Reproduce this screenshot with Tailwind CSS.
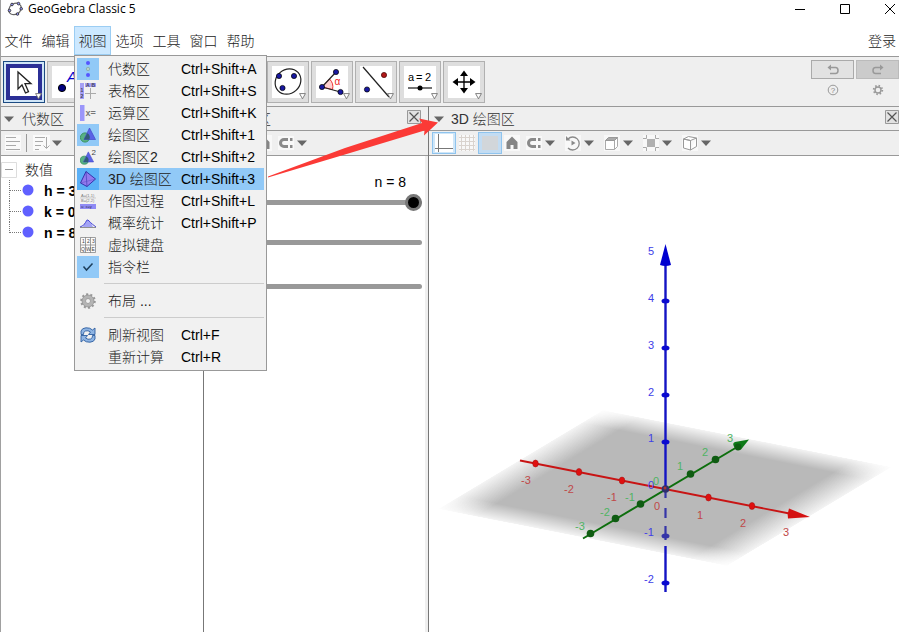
<!DOCTYPE html>
<html lang="zh-CN">
<head>
    <meta charset="UTF-8">
    <meta name="viewport" content="width=device-width, initial-scale=1.0">
    <title>GeoGebra Classic 5</title>
    <script src="https://cdn.jsdelivr.net/npm/@tailwindcss/browser@4"></script>
</head>
<body class="bg-white text-black text-sm font-['Liberation_Sans','Noto_Sans_CJK_SC',sans-serif]">

    <!-- Shared icons -->
    <svg class="hidden">
        <symbol id="tri" viewBox="0 0 10 6"><path d="M0 0.5h10L5 6z" fill="#666"/></symbol>
        <symbol id="corner" viewBox="0 0 6 6"><path d="M0.5 0.5h5L3 5z" fill="#fff" stroke="#777" stroke-width="0.8"/></symbol>
        <symbol id="close" viewBox="0 0 14 14"><path d="M0.5 0.5h13v13h-13z" fill="#e2e2e2" stroke="#999"/><path d="M2.5 2.5l9 9M11.5 2.5l-9 9" stroke="#555" stroke-width="1.2"/></symbol>
        <symbol id="axes" viewBox="0 0 18 18"><path d="M0 0h18v18H0z" fill="#fff"/><path d="M3.5 0v18M0 14.5h18" stroke="#777" fill="none"/></symbol>
        <symbol id="grid" viewBox="0 0 16 16"><path d="M0 0h16v16H0z" fill="#f8f8f8"/><path d="M2.5 0v16M6.5 0v16M10.5 0v16M14.5 0v16M0 2.5h16M0 6.5h16M0 10.5h16M0 14.5h16" stroke="#d9d3ce" fill="none"/></symbol>
        <symbol id="home" viewBox="0 0 16 16"><path d="M0 0h16v16H0z" fill="#f8f8f8"/><path d="M8 1.500L2.500 7v7h4v-4h3v4h4V7z" fill="#858585"/></symbol>
        <symbol id="magnet" viewBox="0 0 16 16"><path d="M0 1h16v14H0z" fill="#f8f8f8"/><path d="M10 4.5H6a3.5 3.5 0 0 0 0 7h4" fill="none" stroke="#8a8a8a" stroke-width="3"/><path d="M12 3h2.5v3H12zM12 10h2.5v3H12z" fill="#8a8a8a"/></symbol>
        <symbol id="gear" viewBox="0 0 16 16"><g fill="none"><circle cx="8" cy="8" r="6.800" stroke="#999" stroke-width="2" stroke-dasharray="2.100 2.172"/><circle cx="8" cy="8" r="4.300" stroke="#b4b4b4" stroke-width="3.400"/><circle cx="8" cy="8" r="6" stroke="#8a8a8a" stroke-width="0.700"/><circle cx="8" cy="8" r="2.500" stroke="#888" stroke-width="0.700"/></g></symbol>
        <symbol id="shapes" viewBox="0 0 16 16"><circle cx="5" cy="10.5" r="4.6" fill="#58b184" stroke="#3c9362"/><path d="M9.500 1l6 11.500H4z" fill="#5a62e6" stroke="#4248c8" stroke-width="0.7"/><path d="M6.300 8.200l1-2a4.600 4.600 0 0 1 2 6.300H4z" fill="#315a78"/></symbol>
    </svg>

    <div class="relative h-screen min-h-[600px] flex flex-col border-l border-[#a0a0a0] overflow-hidden">

        <!-- Title bar -->
        <header class="h-[26px] shrink-0 flex items-center pb-2">
            <svg class="w-4 h-4 ml-1.5" viewBox="0 0 16 16">
                <path d="M5 3.5Q9 1.5 11.5 2.5Q15 5 14 7.5Q13.5 11 11 12.5Q7 14.5 4 13Q1 11 2 8Q2.5 5 5 3.5z" fill="none" stroke="#666" stroke-width="1.2"/>
                <g fill="#99f" stroke="#333" stroke-width="0.9"><circle cx="5" cy="3.5" r="1.3"/><circle cx="11.5" cy="2.6" r="1.3"/><circle cx="14.2" cy="7.8" r="1.3"/><circle cx="10.5" cy="13" r="1.3"/><circle cx="2.500" cy="9.500" r="1.3"/></g>
            </svg>
            <h1 class="ml-[5px] text-xs font-['Open_Sans',sans-serif]">GeoGebra Classic 5</h1>
            <div class="ml-auto flex items-center gap-[35px] pr-1">
                <button aria-label="最小化"><svg class="w-2.5 h-2.5 block" viewBox="0 0 10 10"><path d="M0 5.5h10" stroke="#000"/></svg></button>
                <button aria-label="最大化"><svg class="w-2.5 h-2.5 block" viewBox="0 0 10 10"><path d="M0.5 0.5h9v9h-9z" fill="none" stroke="#000"/></svg></button>
                <button aria-label="关闭"><svg class="w-2.5 h-2.5 block" viewBox="0 0 10 10"><path d="M0 0l10 10M10 0L0 10" stroke="#000"/></svg></button>
            </div>
        </header>

        <!-- Menu bar -->
        <nav class="h-[30px] shrink-0 flex -ml-px font-light text-[#222]">
            <button class="w-[37px]">文件</button>
            <button class="w-[37px]">编辑</button>
            <div class="relative w-[37px]">
                <button class="w-full h-[29px] border border-[#9bcdf3] bg-[#cce8ff]">视图</button>

                <!-- View menu -->
                <div class="absolute z-20 left-0 top-[29px] w-[193px] border border-[#999] bg-[#f1f1f1] p-[2px] text-[#222]">
                    <button class="flex w-full h-[22px] items-center text-left">
                        <span class="w-[22px] h-[22px] p-[3px] bg-[#91c9f7]"><svg viewBox="0 0 16 16"><circle cx="8" cy="2" r="2" fill="#55f"/><circle cx="8" cy="8" r="1.7" fill="#b5d4c8" stroke="#8aa" stroke-width="0.8"/><circle cx="8" cy="14" r="2" fill="#55f"/></svg></span>
                        <span class="w-[73px] ml-[9px]">代数区</span><span class="font-normal text-black">Ctrl+Shift+A</span>
                    </button>
                    <button class="flex w-full h-[22px] items-center text-left">
                        <span class="w-[22px] h-[22px] p-[3px]"><svg viewBox="0 0 16 16"><path d="M5 0h11v4H5zM0 0h4v16H0z" fill="#a5a0f5"/><path d="M10.5 5v11M5 10.5h11" stroke="#aaa"/><g font-size="5" font-weight="bold" fill="#445"><text x="6" y="4">A</text><text x="11.5" y="4">B</text><text x="0.5" y="9">1</text><text x="0.5" y="15">2</text></g></svg></span>
                        <span class="w-[73px] ml-[9px]">表格区</span><span class="font-normal text-black">Ctrl+Shift+S</span>
                    </button>
                    <button class="flex w-full h-[22px] items-center text-left">
                        <span class="w-[22px] h-[22px] p-[3px]"><svg viewBox="0 0 16 16"><path d="M0 0h4.5v16H0z" fill="#9b96fa"/><text x="5.5" y="11" font-size="9" font-weight="bold" fill="#777">x=</text></svg></span>
                        <span class="w-[73px] ml-[9px]">运算区</span><span class="font-normal text-black">Ctrl+Shift+K</span>
                    </button>
                    <button class="flex w-full h-[22px] items-center text-left">
                        <span class="w-[22px] h-[22px] p-[3px] bg-[#91c9f7]"><svg viewBox="0 0 16 16"><use href="#shapes"/></svg></span>
                        <span class="w-[73px] ml-[9px]">绘图区</span><span class="font-normal text-black">Ctrl+Shift+1</span>
                    </button>
                    <button class="flex w-full h-[22px] items-center text-left">
                        <span class="w-[22px] h-[22px] p-[3px]"><svg viewBox="0 0 16 16"><use href="#shapes" y="2" width="14" height="14"/><text x="11.5" y="6" font-size="8" fill="#444">2</text></svg></span>
                        <span class="w-[73px] ml-[9px]">绘图区<span class="font-normal">2</span></span><span class="font-normal text-black">Ctrl+Shift+2</span>
                    </button>
                    <button class="flex w-full h-[22px] items-center text-left bg-[#91c9f7]">
                        <span class="w-[22px] h-[22px] p-[3px] bg-[#5ab0f7]"><svg viewBox="0 0 16 16"><path d="M6 0.5L0.5 12l6.500 3.500L15.5 8z" fill="#9379ee" stroke="#3535ab"/><path d="M6 0.5l1 15" stroke="#3535ab" stroke-width="0.6"/><path d="M0.5 12l15-4" stroke="#5a50c5" stroke-width="0.5"/></svg></span>
                        <span class="w-[73px] ml-[9px]"><span class="font-normal">3D</span> 绘图区</span><span class="font-normal text-black">Ctrl+Shift+3</span>
                    </button>
                    <button class="flex w-full h-[22px] items-center text-left">
                        <span class="w-[22px] h-[22px] p-[3px]"><svg viewBox="0 0 16 16"><path d="M0 11h16v5H0z" fill="#8f8af5"/><g font-size="4" fill="#777"><text x="1" y="4">A=(1,1)</text><text x="1" y="9">B=(2,2)</text><text x="1" y="15" fill="#335">a: x=y</text></g><path d="M0 5h16" stroke="#bbb" stroke-width="0.7"/></svg></span>
                        <span class="w-[73px] ml-[9px]">作图过程</span><span class="font-normal text-black">Ctrl+Shift+L</span>
                    </button>
                    <button class="flex w-full h-[22px] items-center text-left">
                        <span class="w-[22px] h-[22px] p-[3px]"><svg viewBox="0 0 16 16"><path d="M3 12Q6 5 8 5t5 7z" fill="#a3a3f5"/><path d="M0 12Q4 11 5.5 7.5T8 5t2.5 2.5T16 12" fill="none" stroke="#4747d5"/><path d="M0 12.5h16" stroke="#777" stroke-width="0.8"/></svg></span>
                        <span class="w-[73px] ml-[9px]">概率统计</span><span class="font-normal text-black">Ctrl+Shift+P</span>
                    </button>
                    <button class="flex w-full h-[22px] items-center text-left">
                        <span class="w-[22px] h-[22px] p-[3px]"><svg viewBox="0 0 16 16"><path d="M0.5 0.5h15v15H0.5zM0.5 8h15M5.5 0v16M10.5 0v16" fill="#fafafa" stroke="#888" stroke-width="0.800"/><g font-size="5" fill="#444"><text x="2" y="6">1</text><text x="7" y="6">2</text><text x="12" y="6">3</text><text x="1" y="13.5">Q</text><text x="6" y="13.5">W</text><text x="11.5" y="13.5">E</text></g></svg></span>
                        <span class="w-[73px] ml-[9px]">虚拟键盘</span>
                    </button>
                    <button class="flex w-full h-[22px] items-center text-left">
                        <span class="w-[22px] h-[22px] p-[3px] bg-[#91c9f7]"><svg viewBox="0 0 16 16"><path d="M3.5 7.5l3 3.5 6-6.5" fill="none" stroke="#1d3f5c" stroke-width="1.5"/></svg></span>
                        <span class="w-[73px] ml-[9px]">指令栏</span>
                    </button>
                    <hr class="ml-[27px] mt-[5px] mb-[6px] border-[#ccc]">
                    <button class="flex w-full h-[22px] items-center text-left">
                        <span class="w-[22px] h-[22px] p-[3px]"><svg viewBox="0 0 16 16"><use href="#gear"/></svg></span>
                        <span class="w-[73px] ml-[9px]">布局 ...</span>
                    </button>
                    <hr class="ml-[27px] mt-[5px] mb-[6px] border-[#ccc]">
                    <button class="flex w-full h-[22px] items-center text-left">
                        <span class="w-[22px] h-[22px] p-[3px]"><svg viewBox="0 0 16 16"><g fill="#8eb4e3" stroke="#2f5fa0" stroke-width="0.9"><path d="M1 7.5V4Q2 1 6 0.8Q10 0.5 12.5 3L15 1v6.5H8.5L10.5 5Q8 3 5.5 4T3.5 7.5z"/><path d="M15 8.5V12Q14 15 10 15.2Q6 15.5 3.5 13L1 15V8.5h6.5L5.5 11Q8 13 10.5 12T12.5 8.5z"/></g></svg></span>
                        <span class="w-[73px] ml-[9px]">刷新视图</span><span class="font-normal text-black">Ctrl+F</span>
                    </button>
                    <button class="flex w-full h-[22px] items-center text-left">
                        <span class="w-[73px] ml-[31px]">重新计算</span><span class="font-normal text-black">Ctrl+R</span>
                    </button>
                </div>
            </div>
            <button class="w-[37px]">选项</button>
            <button class="w-[37px]">工具</button>
            <button class="w-[37px]">窗口</button>
            <button class="w-[37px]">帮助</button>
            <button class="ml-auto pr-[3px]">登录</button>
        </nav>

        <!-- Tools -->
        <div class="h-[50px] shrink-0 flex border-t border-[#999] bg-[#efefef]">
            <div class="flex gap-0.5 pl-0.5 pt-1">
                <button aria-label="移动" class="w-[42px] h-[42px] p-[2px] border border-[#1c4b82] bg-[#cfe5f7]">
                    <svg viewBox="0 0 36 36"><path d="M2 2h32v32H2z" fill="#fff" stroke="#2b2f96" stroke-width="4"/><path d="M12 8v17l4-4 3.5 8 3-1.3-3.5-8H25z" fill="#fff" stroke="#222" stroke-width="1.3"/><use href="#corner" x="29" y="29" width="7" height="7"/></svg>
                </button>
                <button aria-label="描点" class="w-[42px] h-[42px] p-1 border border-[#b0b0b0] bg-[#dedede]">
                    <svg viewBox="0 0 32 32"><path d="M0 0h32v32H0z" fill="#fff"/><circle cx="10" cy="22" r="3.6" fill="#000080" stroke="#000"/><text x="15" y="16" font-size="15" font-style="italic" fill="#00c">A</text></svg>
                </button>
                <button aria-label="直线" class="w-[42px] h-[42px] border border-[#b0b0b0] bg-[#dedede]"></button>
                <button aria-label="垂线" class="w-[42px] h-[42px] border border-[#b0b0b0] bg-[#dedede]"></button>
                <button aria-label="多边形" class="w-[42px] h-[42px] border border-[#b0b0b0] bg-[#dedede]"></button>
                <button aria-label="圆" class="w-[42px] h-[42px] border border-[#b0b0b0] bg-[#dedede]"></button>
                <button aria-label="椭圆" class="w-[42px] h-[42px] p-1 border border-[#b0b0b0] bg-[#dedede]">
                    <svg viewBox="0 0 32 32" class="overflow-visible"><path d="M0 0h32v32H0z" fill="#fff"/><ellipse cx="16" cy="15.5" rx="13.5" ry="12" transform="rotate(-42 16 15.500)" fill="none" stroke="#222" stroke-width="1.2"/><g fill="#1818a0" stroke="#000" stroke-width="0.7"><circle cx="7" cy="10" r="2.6"/><circle cx="22" cy="10" r="2.6"/><circle cx="10.500" cy="22" r="2.6"/></g><use href="#corner" x="27" y="27" width="7" height="7"/></svg>
                </button>
                <button aria-label="角度" class="w-[42px] h-[42px] p-1 border border-[#b0b0b0] bg-[#dedede]">
                    <svg viewBox="0 0 32 32" class="overflow-visible"><path d="M0 0h32v32H0z" fill="#fff"/><path d="M6 21l7.500-8a11 11 0 0 1 3 10.500z" fill="#ffd0d0" stroke="#e33"/><path d="M20 6L6 21l18.500 5" fill="none" stroke="#222" stroke-width="1.2"/><g fill="#1818a0" stroke="#000" stroke-width="0.7"><circle cx="20" cy="6" r="2.6"/><circle cx="6" cy="21" r="2.6"/><circle cx="24.5" cy="26" r="2.6"/></g><text x="18.5" y="19" font-size="10" fill="#e22">α</text><use href="#corner" x="27" y="27" width="7" height="7"/></svg>
                </button>
                <button aria-label="对称" class="w-[42px] h-[42px] p-1 border border-[#b0b0b0] bg-[#dedede]">
                    <svg viewBox="0 0 32 32" class="overflow-visible"><path d="M0 0h32v32H0z" fill="#fff"/><path d="M3 1l26 30" stroke="#222" stroke-width="1.2"/><circle cx="24" cy="9" r="2.6" fill="#b01818" stroke="#400" stroke-width="0.7"/><circle cx="7" cy="23.5" r="2.6" fill="#1818a0" stroke="#000" stroke-width="0.7"/><use href="#corner" x="27" y="27" width="7" height="7"/></svg>
                </button>
                <button aria-label="滑动条" class="w-[42px] h-[42px] p-1 border border-[#b0b0b0] bg-[#dedede]">
                    <svg viewBox="0 0 32 32" class="overflow-visible"><path d="M0 0h32v32H0z" fill="#fff"/><g font-size="11" fill="#000"><text x="4" y="15">a</text><text x="12" y="15">=</text><text x="21" y="15">2</text></g><path d="M4 22h24" stroke="#444" stroke-width="1.5"/><circle cx="16" cy="22" r="2.5"/><use href="#corner" x="27" y="27" width="7" height="7"/></svg>
                </button>
                <button aria-label="平移视图" class="w-[42px] h-[42px] p-1 border border-[#b0b0b0] bg-[#dedede]">
                    <svg viewBox="0 0 32 32" class="overflow-visible"><path d="M0 0h32v32H0z" fill="#fff"/><path d="M16 8v16M8 16h16" stroke="#000" stroke-width="1.3"/><path d="M16 4.5l4 5.5h-8zM16 27.5l4-5.5h-8zM4.5 16l5.5-4v8zM27.5 16L22 12v8z"/><use href="#corner" x="27" y="27" width="7" height="7"/></svg>
                </button>
            </div>
            <div class="ml-auto grid grid-cols-[43px_43px] gap-x-0.5 content-start pt-[3px]">
                <button aria-label="撤销" class="h-[19px] flex items-center justify-center border border-[#aaa] bg-[#e2e2e2]"><svg class="w-3 h-3" viewBox="0 0 12 12"><path d="M2 3.5h6.5q2.5 0 2.500 3t-2.500 3H3" fill="none" stroke="#999" stroke-width="1.5"/><path d="M4 0.5v6L0.5 3.5z" fill="#999"/></svg></button>
                <button aria-label="重做" class="h-[19px] flex items-center justify-center border border-[#bbb] bg-[#cbcbcb]"><svg class="w-3 h-3" viewBox="0 0 12 12"><path d="M10 3.5H3.5Q1 3.5 1 6.5t2.500 3H9" fill="none" stroke="#999" stroke-width="1.5"/><path d="M8 0.5v6l3.5-3z" fill="#999"/></svg></button>
                <button aria-label="帮助" class="h-[22px] flex items-center justify-center"><svg class="w-3 h-3" viewBox="0 0 12 12"><circle cx="6" cy="6" r="4.8" fill="none" stroke="#999"/><text x="3.8" y="9" font-size="8" fill="#888">?</text></svg></button>
                <button aria-label="设置" class="h-[22px] flex items-center justify-center"><svg class="w-3 h-3" viewBox="0 0 12 12"><circle cx="6" cy="6" r="3" fill="none" stroke="#999" stroke-width="1.4"/><circle cx="6" cy="6" r="4.3" fill="none" stroke="#999" stroke-width="1.8" stroke-dasharray="1.5 1.877"/></svg></button>
            </div>
        </div>

        <main class="flex-1 min-h-0 flex">
            <!-- Algebra -->
            <section class="w-[203px] shrink-0 border-r border-[#777]">
                <div class="h-6 flex items-center gap-2 pl-[3px] border-t border-[#999] bg-[#efefef] font-light text-[#333]">
                    <svg class="w-2.5 h-1.5"><use href="#tri"/></svg>
                    <h2>代数区</h2>
                </div>
                <div class="h-[26px] flex items-center pl-1 border-y border-[#999] bg-[#efefef]">
                    <button aria-label="辅助对象"><svg class="w-4 h-4 block" viewBox="0 0 16 16"><path d="M0 0h16v16H0z" fill="#fafafa"/><path d="M1 2.5h10M1 6.5h14M1 10.5h10M1 14.5h14" stroke="#aaa"/></svg></button>
                    <span class="w-px h-[18px] mx-[5px] bg-[#999]"></span>
                    <button aria-label="排序" class="flex items-center gap-0.5 ml-px"><svg class="w-[17px] h-4" viewBox="0 0 17 16"><path d="M0 0h17v16H0z" fill="#fafafa"/><path d="M2 2.5h10M2 6.5h8M2 10.5h6M2 14.5h4M13.5 2v11M10.5 10.5l3 3 3-3" fill="none" stroke="#aaa"/></svg><svg class="w-2.5 h-1.5"><use href="#tri"/></svg></button>
                </div>
                <ul class="pt-1">
                    <li class="h-5 flex items-center font-light text-[#222]">
                        <svg class="w-4 h-4" viewBox="0 0 16 16"><path d="M0.5 0.5h15v15H0.5z" fill="#fff" stroke="#ddd"/><path d="M4 7.5h8" stroke="#999"/></svg>
                        <span class="ml-2">数值</span>
                    </li>
                    <li class="h-[21px] flex items-center pl-2 font-bold"><svg class="w-[26px] h-[21px]" viewBox="0 0 26 21"><path d="M0.5 0v21M1 10.5h11" stroke="#777" stroke-dasharray="1 1"/><circle cx="19" cy="10" r="5.5" fill="#6060ff"/></svg><span class="ml-[9px]">h = 3</span></li>
                    <li class="h-[21px] flex items-center pl-2 font-bold"><svg class="w-[26px] h-[21px]" viewBox="0 0 26 21"><path d="M0.5 0v21M1 10.5h11" stroke="#777" stroke-dasharray="1 1"/><circle cx="19" cy="10" r="5.5" fill="#6060ff"/></svg><span class="ml-[9px]">k = 0</span></li>
                    <li class="h-[21px] flex items-center pl-2 font-bold"><svg class="w-[26px] h-[21px]" viewBox="0 0 26 21"><path d="M0.5 0v11M1 10.5h11" stroke="#777" stroke-dasharray="1 1"/><circle cx="19" cy="10" r="5.5" fill="#6060ff"/></svg><span class="ml-[9px]">n = 8</span></li>
                </ul>
            </section>

            <!-- Graphics -->
            <section class="w-[225px] shrink-0 flex flex-col border-r border-[#777]">
                <div class="h-6 shrink-0 flex items-center pl-[5px] pr-[7px] border-t border-[#999] bg-[#efefef] font-light text-[#333]">
                    <svg class="w-2.5 h-1.5"><use href="#tri"/></svg>
                    <h2 class="ml-2.5">绘图区</h2>
                    <button aria-label="关闭绘图区" class="ml-auto mb-1"><svg class="w-3.5 h-3.5 block"><use href="#close"/></svg></button>
                </div>
                <div class="h-[26px] shrink-0 flex items-center pl-1 border-y border-[#999] bg-[#efefef]">
                    <button aria-label="坐标轴" class="w-6 h-[22px] p-px border border-[#8fc4ee] bg-[#cfe6f8]"><svg class="w-5 h-[18px]"><use href="#axes"/></svg></button>
                    <button aria-label="网格" class="w-[22px] pl-[3px]"><svg class="w-4 h-4"><use href="#grid"/></svg></button>
                    <button aria-label="标准视图" class="w-[22px] pl-0.5"><svg class="w-4 h-4"><use href="#home"/></svg></button>
                    <button aria-label="吸附" class="w-[39px] flex items-center gap-[3px] pl-0.5"><svg class="w-4 h-4"><use href="#magnet"/></svg><svg class="w-2.5 h-1.5"><use href="#tri"/></svg></button>
                </div>
                <div class="flex-1 pl-8 pr-[3px] pt-4 border-r-3 border-[#efefef]">
                    <label for="n" class="block pr-4 text-right">n = 8</label>
                    <input id="n" type="range" min="0" max="8" value="8" class="block w-full h-5 appearance-none bg-transparent [&::-webkit-slider-runnable-track]:h-[5px] [&::-webkit-slider-runnable-track]:rounded-full [&::-webkit-slider-runnable-track]:bg-[#999] [&::-webkit-slider-thumb]:appearance-none [&::-webkit-slider-thumb]:w-[17px] [&::-webkit-slider-thumb]:h-[17px] [&::-webkit-slider-thumb]:-mt-1.5 [&::-webkit-slider-thumb]:rounded-full [&::-webkit-slider-thumb]:border-3 [&::-webkit-slider-thumb]:border-[#777] [&::-webkit-slider-thumb]:bg-black">
                    <input aria-label="h" type="range" min="0" max="8" value="0" class="block w-full h-5 mt-5 appearance-none bg-transparent [&::-webkit-slider-runnable-track]:h-[5px] [&::-webkit-slider-runnable-track]:rounded-full [&::-webkit-slider-runnable-track]:bg-[#999] [&::-webkit-slider-thumb]:appearance-none [&::-webkit-slider-thumb]:w-[17px] [&::-webkit-slider-thumb]:h-[17px] [&::-webkit-slider-thumb]:-mt-1.5 [&::-webkit-slider-thumb]:rounded-full [&::-webkit-slider-thumb]:bg-black">
                    <input aria-label="k" type="range" min="0" max="8" value="0" class="block w-full h-5 mt-6 appearance-none bg-transparent [&::-webkit-slider-runnable-track]:h-[5px] [&::-webkit-slider-runnable-track]:rounded-full [&::-webkit-slider-runnable-track]:bg-[#999] [&::-webkit-slider-thumb]:appearance-none [&::-webkit-slider-thumb]:w-[17px] [&::-webkit-slider-thumb]:h-[17px] [&::-webkit-slider-thumb]:-mt-1.5 [&::-webkit-slider-thumb]:rounded-full [&::-webkit-slider-thumb]:bg-black">
                </div>
            </section>

            <!-- 3D Graphics -->
            <section class="flex-1 min-w-0 flex flex-col">
                <div class="h-6 shrink-0 flex items-center pl-[5px] border-t border-[#999] bg-[#efefef] font-light text-[#333]">
                    <svg class="w-2.5 h-1.5"><use href="#tri"/></svg>
                    <h2 class="ml-[7px]"><span class="font-normal">3D</span> 绘图区</h2>
                    <button aria-label="关闭3D绘图区" class="ml-auto mb-1"><svg class="w-3.5 h-3.5 block"><use href="#close"/></svg></button>
                </div>
                <div class="h-[26px] shrink-0 flex items-center pl-[3px] border-y border-[#999] bg-[#efefef]">
                    <button aria-label="坐标轴" class="w-6 h-[22px] p-px border border-[#8fc4ee] bg-[#cfe6f8]"><svg class="w-5 h-[18px]"><use href="#axes"/></svg></button>
                    <button aria-label="网格" class="w-[22px] pl-[3px]"><svg class="w-4 h-4"><use href="#grid"/></svg></button>
                    <button aria-label="xOy平面" class="w-6 h-[22px] p-[3px] border border-[#8fc4ee] bg-[#c3dcf2]"><span class="block w-full h-full bg-[#d2d6da]"></span></button>
                    <button aria-label="标准视图" class="w-[22px] pl-0.5"><svg class="w-4 h-4"><use href="#home"/></svg></button>
                    <button aria-label="吸附" class="w-[39px] flex items-center gap-[3px] pl-0.5"><svg class="w-4 h-4"><use href="#magnet"/></svg><svg class="w-2.5 h-1.5"><use href="#tri"/></svg></button>
                    <button aria-label="旋转" class="w-[39px] flex items-center gap-[3px] pl-0.5"><svg class="w-4 h-4" viewBox="0 0 16 16"><path d="M0 0h16v16H0z" fill="#f8f8f8"/><path d="M3 4a6.5 6.5 0 1 1 0 9" fill="none" stroke="#8a8a8a" stroke-width="1.3"/><path d="M1 1v4.500h4.500zM6.500 5.500v5l4-2.500z" fill="#8a8a8a"/></svg><svg class="w-2.5 h-1.5"><use href="#tri"/></svg></button>
                    <button aria-label="视图方向" class="w-[39px] flex items-center gap-[3px] pl-0.5"><svg class="w-4 h-4" viewBox="0 0 16 16"><path d="M0 0h16v16H0z" fill="#f8f8f8"/><path d="M1.5 5.5h9v9h-9zM10.500 5.500l3-3v9l-3 3" fill="#fff" stroke="#aaa"/><path d="M1.5 5.5l3-3h9l-3 3z" fill="#aaa" stroke="#999"/></svg><svg class="w-2.5 h-1.5"><use href="#tri"/></svg></button>
                    <button aria-label="裁剪" class="w-[39px] flex items-center gap-[3px] pl-0.5"><svg class="w-4 h-4" viewBox="0 0 16 16"><path d="M0 0h16v16H0z" fill="#f8f8f8"/><path d="M4 4h8v8H4z" fill="#b0b0b0"/><path d="M3.500 0v3.500H0M12.500 0v3.500H16M3.500 16v-3.500H0M12.500 16v-3.500H16" fill="none" stroke="#aaa"/></svg><svg class="w-2.5 h-1.5"><use href="#tri"/></svg></button>
                    <button aria-label="投影" class="w-[39px] flex items-center gap-[3px] pl-0.5"><svg class="w-4 h-4" viewBox="0 0 16 16"><path d="M0 0h16v16H0z" fill="#f8f8f8"/><path d="M1.5 4l7 1.5v9.5l-7-2zM1.5 4l5-2.5 8 1.5-6 2.5zM14.5 3v8.5l-6 3.5" fill="#fff" stroke="#999"/></svg><svg class="w-2.5 h-1.5"><use href="#tri"/></svg></button>
                </div>
                <svg class="w-full flex-1 min-h-0" viewBox="429 156 470 476">
                    <defs>
                        <linearGradient id="fadeX"><stop offset="0" stop-color="#fff" stop-opacity=".15"/><stop offset=".13" stop-color="#fff"/><stop offset=".87" stop-color="#fff"/><stop offset="1" stop-color="#fff" stop-opacity=".15"/></linearGradient>
                        <linearGradient id="fadeY" x2="0" y2="1"><stop offset="0" stop-color="#b9b9b9" stop-opacity=".15"/><stop offset=".13" stop-color="#b9b9b9"/><stop offset=".87" stop-color="#b9b9b9"/><stop offset="1" stop-color="#b9b9b9" stop-opacity=".15"/></linearGradient>
                        <mask id="edge" maskUnits="userSpaceOnUse" x="0" y="0" width="100" height="100"><rect width="100" height="100" fill="url(#fadeX)"/></mask>
                    </defs>
                    <!-- xOy plane -->
                    <g transform="matrix(1.65 -0.99 2.89 0.57 438 509)"><rect width="100" height="100" fill="url(#fadeY)" mask="url(#edge)"/></g>
                    <!-- x axis -->
                    <path d="M520 460.5L792 514" stroke="#c81414" stroke-width="1.8"/>
                    <path d="M789 508.500l21 8.500-22 1.500q-1-5 1-10z" fill="#d41111"/>
                    <g fill="#e01010" stroke="#a01010" stroke-width="0.5"><ellipse cx="535.5" cy="463.5" rx="2.8" ry="3.5"/><ellipse cx="579" cy="472" rx="2.8" ry="3.5"/><ellipse cx="622" cy="480.5" rx="2.8" ry="3.5"/><ellipse cx="708.5" cy="497.5" rx="2.8" ry="3.5"/><ellipse cx="752" cy="506" rx="2.8" ry="3.5"/></g>
                    <!-- y axis -->
                    <path d="M583 538.5L738 446.5" stroke="#0d6e0d" stroke-width="2"/>
                    <path d="M749 439.500l-14 2.500q-3 1-1 4.500 2 4 7 3z" fill="#0d7a17"/>
                    <g fill="#0f5c12"><circle cx="590.5" cy="533.5" r="3.8"/><circle cx="615.5" cy="518.5" r="3.8"/><circle cx="640.5" cy="504" r="3.8"/><circle cx="690.5" cy="474" r="3.8"/><circle cx="715.5" cy="459.5" r="3.8"/><circle cx="738" cy="447" r="3.4"/></g>
                    <!-- z axis -->
                    <path d="M665.5 262V489M665.5 546v46" stroke="#1414c4" stroke-width="2.4"/>
                    <path d="M665.5 490v8M665.5 508v10M665.5 526v14" stroke="#3636a8" stroke-width="2.2"/>
                    <path d="M665.5 244l5.5 21q-5.5 2-11 0z" fill="#0000d0"/>
                    <g fill="#0a0ad0"><ellipse cx="665.5" cy="301" rx="4" ry="2.5"/><ellipse cx="665.5" cy="348" rx="4" ry="2.5"/><ellipse cx="665.5" cy="395" rx="4" ry="2.5"/><ellipse cx="665.5" cy="442" rx="4" ry="2.5"/><ellipse cx="665.5" cy="583" rx="4" ry="2.5"/></g>
                    <ellipse cx="665.5" cy="536" rx="4" ry="2.5" fill="#3636a8"/>
                    <circle cx="665.5" cy="489" r="3.8" fill="#30306c"/><circle cx="665" cy="488" r="1.5" fill="#a33"/>
                    <g font-size="11" text-anchor="middle" fill="#4040e8">
                        <text x="651" y="255">5</text><text x="651" y="302">4</text><text x="651" y="349">3</text><text x="651" y="396">2</text><text x="651" y="442">1</text><text x="651" y="489">0</text><text x="649" y="536">-1</text><text x="649" y="583">-2</text>
                    </g>
                    <g font-size="11" text-anchor="middle" fill="#c04848">
                        <text x="526" y="484">-3</text><text x="569" y="493">-2</text><text x="612" y="501">-1</text><text x="657" y="510">0</text><text x="700" y="519">1</text><text x="743" y="527">2</text><text x="786" y="536">3</text>
                    </g>
                    <g font-size="11" text-anchor="middle" fill="#4fb463">
                        <text x="580" y="530">-3</text><text x="605" y="516">-2</text><text x="630" y="501">-1</text><text x="656" y="485">0</text><text x="680" y="470">1</text><text x="705" y="456">2</text><text x="730" y="442">3</text>
                    </g>
                </svg>
            </section>
        </main>

        <!-- Pointer from the menu item to the 3D view -->
        <svg class="absolute z-30 left-[266px] top-[110px] w-[175px] h-[70px] pointer-events-none" viewBox="267 110 175 70"><path d="M268 176.5L345 148l77-25-3-4.5 19 4-14 13 0.5-5L350 153l-82 24.5z" fill="#fb3a36"/></svg>
    </div>
</body>
</html>
